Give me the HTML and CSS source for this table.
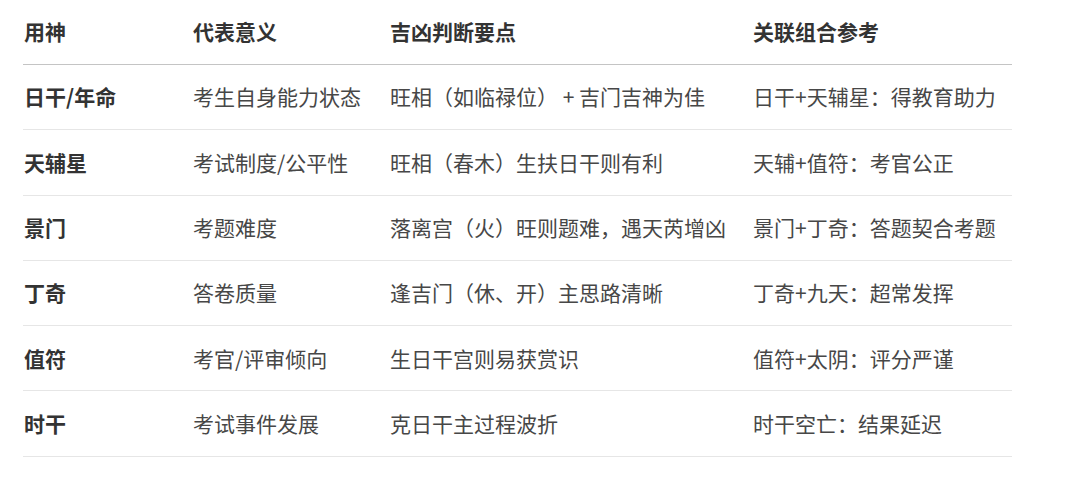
FILE: index.html
```html
<!DOCTYPE html>
<html lang="zh-CN">
<head>
<meta charset="utf-8">
<title>用神表</title>
<link rel="stylesheet" href="styles.css">
</head>
<body>
<table class="yt">
  <colgroup>
    <col class="c1"><col class="c2"><col class="c3"><col class="c4">
  </colgroup>
  <thead>
    <tr><th>用神</th><th>代表意义</th><th>吉凶判断要点</th><th>关联组合参考</th></tr>
  </thead>
  <tbody>
    <tr><td class="key">日干/年命</td><td>考生自身能力状态</td><td>旺相（如临禄位） + 吉门吉神为佳</td><td>日干+天辅星：得教育助力</td></tr>
    <tr><td class="key">天辅星</td><td>考试制度/公平性</td><td>旺相（春木）生扶日干则有利</td><td>天辅+值符：考官公正</td></tr>
    <tr><td class="key">景门</td><td>考题难度</td><td>落离宫（火）旺则题难，遇天芮增凶</td><td>景门+丁奇：答题契合考题</td></tr>
    <tr><td class="key">丁奇</td><td>答卷质量</td><td>逢吉门（休、开）主思路清晰</td><td>丁奇+九天：超常发挥</td></tr>
    <tr><td class="key">值符</td><td>考官/评审倾向</td><td>生日干宫则易获赏识</td><td>值符+太阴：评分严谨</td></tr>
    <tr><td class="key">时干</td><td>考试事件发展</td><td>克日干主过程波折</td><td>时干空亡：结果延迟</td></tr>
  </tbody>
</table>
</body>
</html>
```
FILE: styles.css
```css
html, body {
  margin: 0;
  padding: 0;
  background: #ffffff;
}
body {
  font-family: "Noto Sans CJK SC", "Noto Sans", sans-serif;
  font-size: 21px;
  color: #474747;
}
.yt {
  margin-left: 23px;
  width: 989px;
  table-layout: fixed;
  border-collapse: separate;
  border-spacing: 0;
}
.c1 { width: 169px; }
.c2 { width: 197px; }
.c3 { width: 363px; }
.c4 { width: 260px; }
.yt th, .yt td {
  padding: 0 0 0 1px;
  text-align: left;
  vertical-align: middle;
  line-height: 1.4;
  white-space: nowrap;
}
.yt th {
  height: 64px;
  font-weight: 700;
  color: #333333;
  border-bottom: 1px solid #c4c4c4;
}
.yt td {
  height: 64.3px;
  border-bottom: 1px solid #e6e6e6;
}
.yt td.key {
  font-weight: 700;
  color: #333333;
}
```
